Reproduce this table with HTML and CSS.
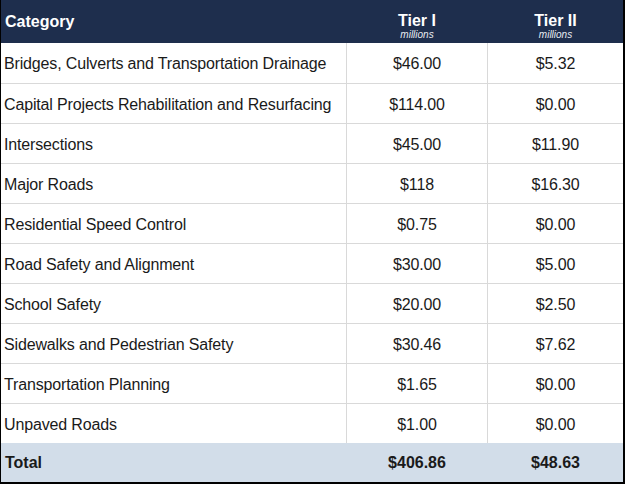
FILE: index.html
```html
<!DOCTYPE html>
<html>
<head>
<meta charset="utf-8">
<link rel="stylesheet" href="styles.css">
</head>
<body>
<div class="table">
  <div class="row head">
    <div class="cell first">Category</div>
    <div class="cell num"><span class="tier">Tier I</span><span class="unit">millions</span></div>
    <div class="cell num"><span class="tier">Tier II</span><span class="unit">millions</span></div>
  </div>
  <div class="row body"><div class="cell first">Bridges, Culverts and Transportation Drainage</div><div class="cell num">$46.00</div><div class="cell num">$5.32</div></div>
  <div class="row body"><div class="cell first">Capital Projects Rehabilitation and Resurfacing</div><div class="cell num">$114.00</div><div class="cell num">$0.00</div></div>
  <div class="row body"><div class="cell first">Intersections</div><div class="cell num">$45.00</div><div class="cell num">$11.90</div></div>
  <div class="row body"><div class="cell first">Major Roads</div><div class="cell num">$118</div><div class="cell num">$16.30</div></div>
  <div class="row body"><div class="cell first">Residential Speed Control</div><div class="cell num">$0.75</div><div class="cell num">$0.00</div></div>
  <div class="row body"><div class="cell first">Road Safety and Alignment</div><div class="cell num">$30.00</div><div class="cell num">$5.00</div></div>
  <div class="row body"><div class="cell first">School Safety</div><div class="cell num">$20.00</div><div class="cell num">$2.50</div></div>
  <div class="row body"><div class="cell first">Sidewalks and Pedestrian Safety</div><div class="cell num">$30.46</div><div class="cell num">$7.62</div></div>
  <div class="row body"><div class="cell first">Transportation Planning</div><div class="cell num">$1.65</div><div class="cell num">$0.00</div></div>
  <div class="row body"><div class="cell first">Unpaved Roads</div><div class="cell num">$1.00</div><div class="cell num">$0.00</div></div>
  <div class="row total">
    <div class="cell first">Total</div>
    <div class="cell num">$406.86</div>
    <div class="cell num">$48.63</div>
  </div>
</div>
</body>
</html>
```
FILE: styles.css
```css
html, body {
  margin: 0;
  padding: 0;
  background: #ffffff;
}
body {
  font-family: "Liberation Sans", Arial, sans-serif;
  font-size: 16px;
  color: #1a1a1a;
}
.table {
  width: 625px;
  height: 484px;
  box-sizing: border-box;
  border-left: 1px solid #000;
  border-right: 2px solid #000;
  border-bottom: 2px solid #000;
  display: flex;
  flex-direction: column;
}
.row {
  display: grid;
  grid-template-columns: 345px 141px 136px;
  height: 40px;
  box-sizing: border-box;
}
.row.body + .row.body {
  border-top: 1px solid #d9d9d9;
}
.body {
  letter-spacing: -0.15px;
}
.body .cell {
  padding-top: 2px;
}
.cell {
  display: flex;
  align-items: center;
  box-sizing: border-box;
}
.cell.first {
  padding-left: 3px;
}
.cell.num {
  justify-content: center;
  border-left: 1px solid #d9d9d9;
}
.head {
  height: 43px;
  background: #1e2e4d;
  color: #ffffff;
  font-weight: bold;
}
.head .cell.num {
  border-left-color: #1e2e4d;
  flex-direction: column;
  align-items: center;
  justify-content: flex-start;
  padding-top: 12px;
}
.head .cell.first {
  padding-left: 4px;
  padding-top: 1px;
}
.tier {
  line-height: 17px;
}
.unit {
  font-size: 10px;
  font-style: italic;
  font-weight: normal;
  line-height: 11px;
  color: #e8ecf2;
}
.total {
  height: 39px;
  background: #d2dde9;
  font-weight: bold;
}
.total .cell.num {
  border-left: 1px solid #d2dde9;
}
.total .cell.first {
  padding-left: 4px;
}
```
